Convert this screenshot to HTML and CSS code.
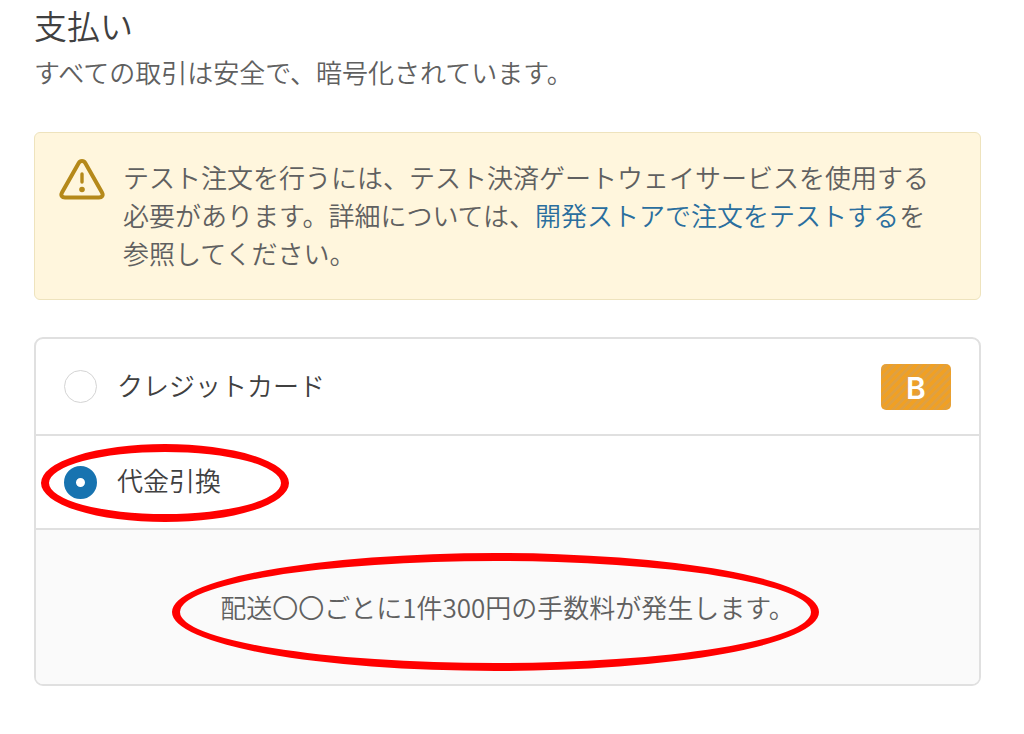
FILE: index.html
```
<!DOCTYPE html>
<html lang="ja">
<head>
  <meta charset="UTF-8"/>
  <meta name="viewport" content="width=device-width, initial-scale=1"/>
  <title>支払い</title>
  <link rel="stylesheet" href="styles.css">
</head>
<body>

  <main class="payment">
    <!-- HEADING -->
    <h1>支払い</h1>
    <p class="lead">すべての取引は安全で、暗号化されています。</p>

    <!-- TEST ORDER NOTICE -->
    <div class="notice">
      <svg class="notice-icon" viewBox="0 0 46 44" fill="none" stroke="#b5891a" stroke-width="4" stroke-linecap="round" stroke-linejoin="round" aria-hidden="true">
        <path d="M19.6 5.2 3 34.6C1.4 37.6 3 39.5 6 39.5H40C43 39.5 44.6 37.6 43 34.6L26.4 5.2C24.8 2.4 21.2 2.4 19.6 5.2Z"/>
        <path d="M23 16V24" stroke-width="3.4"/>
        <circle cx="23" cy="31.5" r="2.8" fill="#b5891a" stroke="none"/>
      </svg>
      <p>テスト注文を行うには、テスト決済ゲートウェイサービスを使用する必要があります。詳細については、<a href="#test-order">開発ストアで注文をテストする</a>を参照してください。</p>
    </div>

    <!-- PAYMENT METHODS -->
    <form class="methods">
      <div class="method">
        <input type="radio" name="method" id="credit">
        <label for="credit">クレジットカード</label>
        <span class="card-brand">B</span>
      </div>
      <div class="method selected">
        <input type="radio" name="method" id="cod" checked>
        <label for="cod">代金引換</label>
        <span class="ring ring-method"></span>
      </div>
      <div class="details">
        <p>配送〇〇ごとに1件300円の手数料が発生します。</p>
        <span class="ring ring-details"></span>
      </div>
    </form>
  </main>

</body>
</html>
```

FILE: styles.css
```
/* GLOBAL STYLES */
* {
  margin: 0;
  padding: 0;
  box-sizing: border-box;
}
body {
  font-family: "Noto Sans CJK JP", sans-serif;
  font-size: 26px;
  font-weight: 350;
  line-height: 38px;
  color: #606060;
  background: #fff;
}
.payment {
  padding: 4px 43px 48px 34px;
}
/* HEADING */
h1 {
  font-size: 33px;
  font-weight: 350;
  line-height: 42px;
  color: #404040;
}
.lead {
  margin: 7px 0 41px;
}
/* NOTICE */
.notice {
  display: flex;
  align-items: flex-start;
  gap: 18px;
  padding: 25px 40px 27px 24px;
  margin-bottom: 37px;
  background: #fff6dd;
  border: 1px solid #eee3bd;
  border-radius: 6px;
}
.notice-icon {
  flex: none;
  width: 46px;
  height: 44px;
}
.notice a {
  color: #2a6e9e;
  text-decoration: none;
}
/* PAYMENT METHODS */
.methods {
  border: 2px solid #e0e0e0;
  border-radius: 9px;
}
.method {
  position: relative;
  display: flex;
  align-items: center;
  min-height: 97px;
  padding: 0 28px;
  color: #404040;
  border-bottom: 2px solid #e0e0e0;
}
.method.selected {
  min-height: 94px;
}
.method label {
  padding-bottom: 4px;
}
.method input {
  appearance: none;
  width: 33px;
  height: 33px;
  margin-right: 20px;
  background: #fff;
  border: 1px solid #d4d4d4;
  border-radius: 50%;
}
.method input:checked {
  border: 12px solid #1773b0;
}
.card-brand {
  width: 70px;
  height: 46px;
  margin-left: auto;
  font-family: Inter, sans-serif;
  font-size: 30px;
  font-weight: 600;
  line-height: 48px;
  text-align: center;
  color: #fff;
  background: repeating-linear-gradient(135deg, #f0a024 0 3px, #e0a040 3px 6px);
  border-radius: 5px;
}
.details {
  position: relative;
  padding: 58px 28px;
  text-align: center;
  background: #fafafa;
  border-radius: 0 0 7px 7px;
}
/* RED HIGHLIGHTS */
.ring {
  position: absolute;
  border: 8px solid #f00;
  border-radius: 50%;
  pointer-events: none;
}
.ring-method {
  top: 8px;
  left: 5px;
  width: 248px;
  height: 78px;
}
.ring-details {
  top: 23px;
  left: 50%;
  width: 647px;
  height: 118px;
  margin-left: -336px;
}
```
